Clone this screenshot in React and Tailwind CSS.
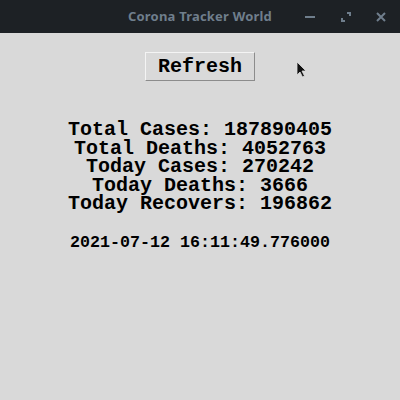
const stats = [
  'Total Cases: 187890405',
  'Total Deaths: 4052763',
  'Today Cases: 270242',
  'Today Deaths: 3666',
  'Today Recovers: 196862',
];

const App = () => {
  return (
    <div className="w-[400px] h-[400px] flex flex-col bg-[#d9d9d9] overflow-hidden">
      {/* Title bar */}
      <div className="relative h-[33px] bg-[#1d2125] flex items-center justify-center">
        <span className="text-[13px] font-bold text-[#6f7e8c] tracking-[0.2px]" style={{ fontFamily: '"Noto Sans", sans-serif' }}>
          Corona Tracker World
        </span>
        <div className="absolute right-0 top-0 h-full flex items-center">
          <svg width="10" height="2" viewBox="0 0 10 2" className="mr-[26px]">
            <rect width="10" height="2" fill="#6f7e8c" />
          </svg>
          <svg width="10" height="10" viewBox="0 0 10 10" className="mr-[25px]">
            <path d="M6 1h3v3M1 6v3h3" stroke="#6f7e8c" strokeWidth="2" fill="none" />
          </svg>
          <svg width="10" height="10" viewBox="0 0 10 10" className="mr-[14px]">
            <path d="M1 1l8 8M9 1l-8 8" stroke="#6f7e8c" strokeWidth="2" />
          </svg>
        </div>
      </div>

      {/* Body */}
      <div className="relative flex-1 flex flex-col items-center" style={{ fontFamily: '"Liberation Mono", "DejaVu Sans Mono", monospace' }}>
        <button className="mt-[19px] w-[110px] h-[29px] bg-[#d9d9d9] border border-t-[#f4f4f4] border-l-[#f4f4f4] border-b-[#8c8c8c] border-r-[#8c8c8c] text-[20px] font-bold text-black leading-none flex items-center justify-center">
          Refresh
        </button>

        <svg width="12" height="18" viewBox="0 0 12 18" className="absolute left-[296px] top-[28px]">
          <path d="M1 1v13l3-3 2.5 5 2-1-2.5-5h4z" fill="#111" stroke="#ddd" strokeWidth="0.8" />
        </svg>

        <div className="mt-[40px] flex flex-col items-center">
          {stats.map((s) => (
            <div key={s} className="text-[20px] font-bold text-black leading-[18.5px] whitespace-pre">
              {s}
            </div>
          ))}
        </div>

        <div className="mt-[21px] text-[16.67px] font-bold text-black leading-[16px] whitespace-pre">
          2021-07-12 16:11:49.776000
        </div>
      </div>
    </div>
  );
};

export default App;
